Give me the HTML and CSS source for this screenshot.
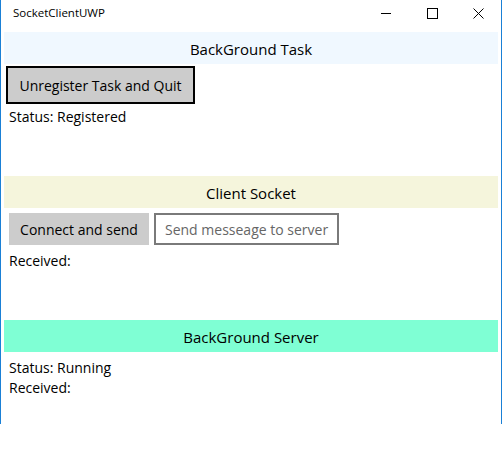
FILE: index.html
```html
<!DOCTYPE html>
<html>
<head>
<meta charset="utf-8">
<link rel="stylesheet" href="styles.css">
</head>
<body>
<div class="window">
  <div class="titlebar">
    <div class="title">SocketClientUWP</div>
    <div class="controls">
      <div class="ctl"><svg width="10" height="10" viewBox="0 0 10 10"><path d="M0 5.5H10" stroke="#000" stroke-width="1"/></svg></div>
      <div class="ctl"><svg width="11" height="11" viewBox="0 0 11 11"><rect x="0.5" y="0.5" width="10" height="10" fill="none" stroke="#000" stroke-width="1"/></svg></div>
      <div class="ctl"><svg width="11" height="11" viewBox="0 0 11 11"><path d="M0.5 0.5L10.5 10.5M10.5 0.5L0.5 10.5" stroke="#000" stroke-width="1"/></svg></div>
    </div>
  </div>
  <div class="content">
    <section class="panel">
      <div class="header header-task">BackGround Task</div>
      <div class="task-body">
        <button class="btn btn-bordered">Unregister Task and Quit</button>
        <div class="line line-indent">Status: Registered</div>
      </div>
    </section>
    <section class="panel">
      <div class="header header-client">Client Socket</div>
      <div class="client-body">
        <div class="row">
          <button class="btn btn-flat">Connect and send</button>
          <div class="textbox">Send messeage to server</div>
        </div>
        <div class="line">Received:</div>
      </div>
    </section>
    <section class="panel">
      <div class="header header-server">BackGround Server</div>
      <div class="server-body">
        <div class="line">Status: Running</div>
        <div class="line">Received:</div>
      </div>
    </section>
  </div>
</div>
</body>
</html>
```

FILE: styles.css
```css
* { box-sizing: border-box; }
html, body { margin: 0; padding: 0; background: #fff; }
body {
  font-family: "Open Sans", "Noto Sans", sans-serif;
  color: #000;
  width: 503px;
  height: 460px;
}
.window {
  width: 502px;
  height: 424px;
  border-left: 1px solid #1a80d6;
  border-right: 1px solid #1a80d6;
  overflow: hidden;
  background: #fff;
}
.titlebar {
  height: 32px;
  display: flex;
  justify-content: space-between;
  align-items: flex-start;
}
.title {
  font-size: 11.5px;
  line-height: 18px;
  padding: 4px 0 0 12px;
}
.controls { display: flex; }
.ctl {
  width: 46px;
  height: 26px;
  display: flex;
  align-items: center;
  justify-content: center;
}
.ctl svg { display: block; }
.content { padding: 0 3px; }
.panel { height: 144px; }
.header {
  height: 32px;
  display: flex;
  align-items: center;
  justify-content: center;
  font-size: 15px;
  padding-top: 1px;
}
.header-task { background: #f0f8ff; }
.header-client { background: #f5f5dc; }
.header-server { background: #7fffd4; }
.btn {
  font-family: inherit;
  font-size: 14px;
  color: #000;
  background: #cccccc;
  margin: 0;
  padding: 0;
  cursor: default;
}
.btn-bordered {
  width: 189px;
  height: 38px;
  border: 2px solid #000;
}
.btn-flat {
  width: 140px;
  height: 32px;
  border: none;
}
.task-body { padding: 2px 0 0 2px; }
.line {
  font-size: 14px;
  line-height: 20px;
}
.line-indent { padding: 3px 0 0 3px; }
.client-body { padding: 5px; }
.row { display: flex; gap: 5px; }
.textbox {
  width: 185px;
  height: 32px;
  border: 2px solid #7a7a7a;
  color: #666;
  font-size: 14px;
  display: flex;
  align-items: center;
  padding-left: 9px;
  white-space: nowrap;
  overflow: hidden;
}
.client-body .line { margin-top: 6px; }
.server-body { padding: 5px; }
.server-body .line:first-child { padding-top: 1px; }
```
